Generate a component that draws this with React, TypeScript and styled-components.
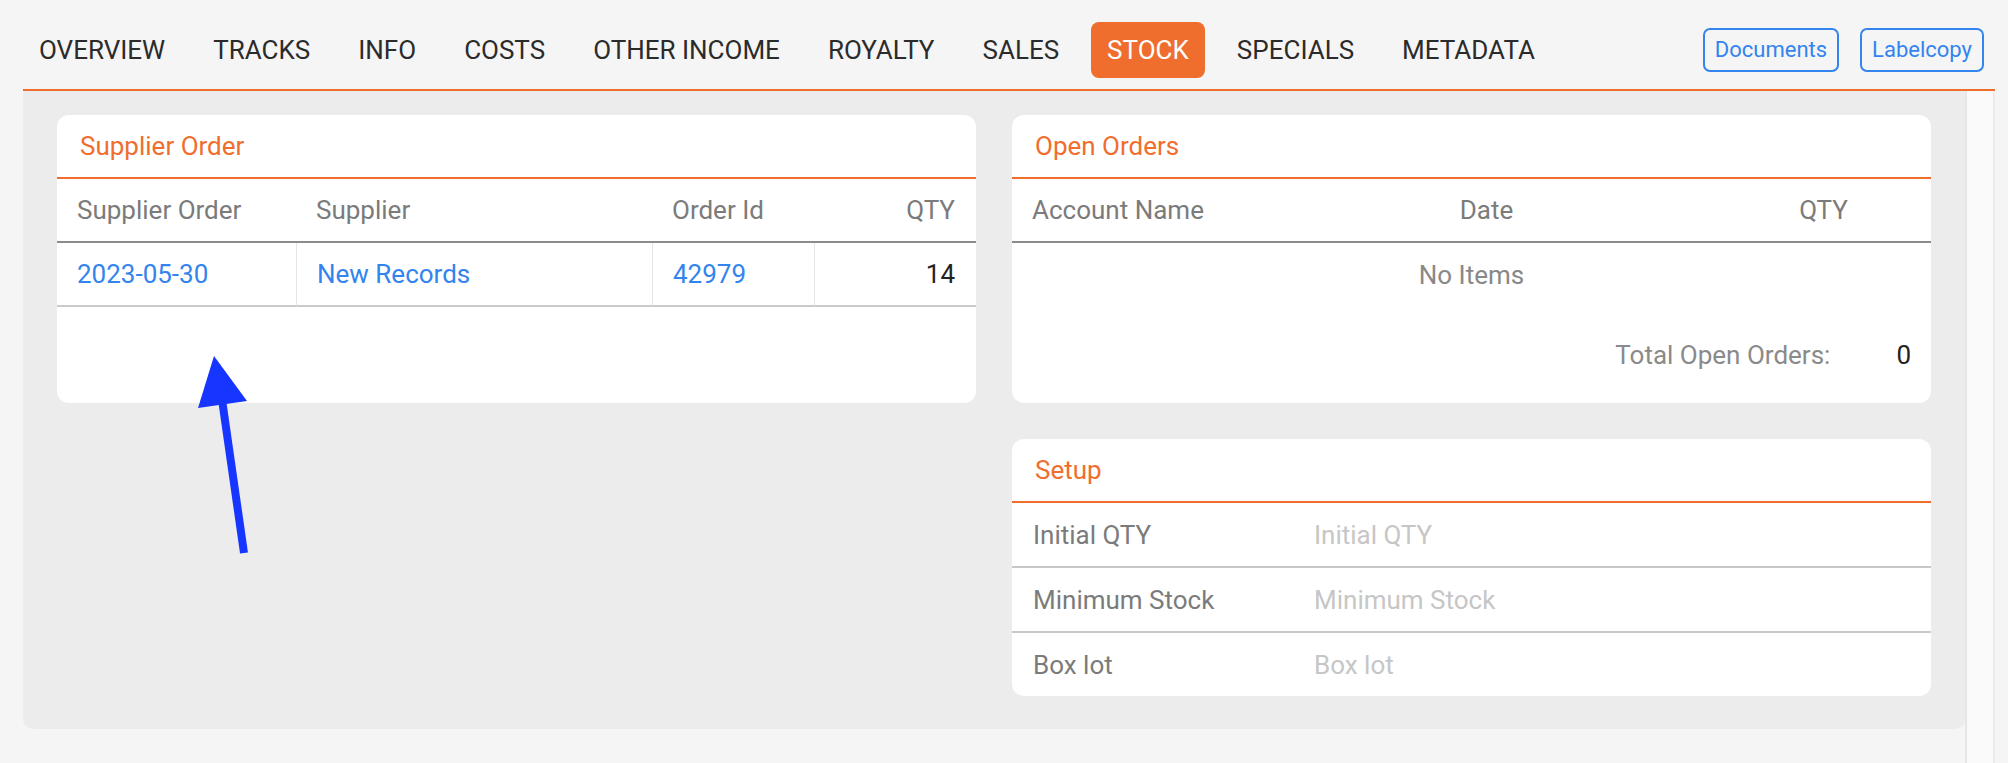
import React from 'react'
import styled, { createGlobalStyle } from 'styled-components'

const ORANGE = '#ef6e2e'
const LINK = '#3384ee'
const MUTED = '#7b7b7b'

const GlobalStyle = createGlobalStyle`
  * {
    box-sizing: border-box;
  }
  html,
  body {
    margin: 0;
    padding: 0;
    background: #f5f5f5;
    font-family: Roboto, 'Liberation Sans', Arial, sans-serif;
  }
`

const Page = styled.div`
  position: relative;
  min-height: 100vh;
  display: flex;
  flex-direction: column;
  background: #f5f5f5;
`

const TopBar = styled.header`
  display: flex;
  align-items: center;
  height: 91px;
  margin: 0 13px 0 23px;
  padding: 10px 11px 0 0;
  border-bottom: 2px solid ${ORANGE};
`

const Tabs = styled.nav`
  flex: 1;
  display: flex;
  gap: 16px;
`

const Tab = styled.a<{ $active?: boolean }>`
  display: flex;
  align-items: center;
  height: 56px;
  padding: 0 16px;
  border-radius: 8px;
  font-size: 26px;
  text-transform: uppercase;
  color: ${(p) => (p.$active ? '#ffffff' : '#2b2b2b')};
  background: ${(p) => (p.$active ? ORANGE : 'transparent')};
  cursor: pointer;
`

const Actions = styled.div`
  display: flex;
  gap: 21px;
`

const OutlineButton = styled.button`
  height: 44px;
  padding: 0 10px;
  border: 2px solid ${LINK};
  border-radius: 7px;
  background: transparent;
  color: ${LINK};
  font-family: Roboto, 'Liberation Sans', Arial, sans-serif;
  font-size: 22px;
  cursor: pointer;
`

const Body = styled.div`
  flex: 1;
  display: flex;
  align-items: flex-start;
  margin-right: 13px;
`

const Panel = styled.main`
  flex: 1;
  margin-left: 23px;
  display: grid;
  grid-template-columns: 1fr 1fr;
  gap: 36px;
  padding: 24px 34px 33px;
  background: #ececec;
  border-radius: 0 0 10px 10px;
`

const ScrollTrack = styled.div`
  align-self: stretch;
  width: 30px;
  background: #fafafa;
  border-left: 2px solid #e6e6e6;
  border-right: 2px solid #ebebeb;
`

const Card = styled.section<{ $col: number; $row: number }>`
  grid-column: ${(p) => p.$col};
  grid-row: ${(p) => p.$row};
  background: #ffffff;
  border-radius: 12px;
  overflow: hidden;
`

const CardTitle = styled.h3`
  display: flex;
  align-items: center;
  height: 64px;
  margin: 0;
  padding-left: 23px;
  border-bottom: 2px solid ${ORANGE};
  color: ${ORANGE};
  font-size: 26px;
  font-weight: 400;
`

const TableGrid = styled.div<{ $columns: string }>`
  display: grid;
  grid-template-columns: ${(p) => p.$columns};
`

const HeadCell = styled.div<{ $align?: 'left' | 'center' | 'right' }>`
  display: flex;
  align-items: center;
  justify-content: ${(p) =>
    p.$align === 'right' ? 'flex-end' : p.$align === 'center' ? 'center' : 'flex-start'};
  height: 64px;
  padding: 0 21px 0 20px;
  border-bottom: 2px solid #8c8c8c;
  color: ${MUTED};
  font-size: 26px;
`

const BodyCell = styled.div<{ $link?: boolean; $divider?: boolean; $align?: 'left' | 'right' }>`
  display: flex;
  align-items: center;
  justify-content: ${(p) => (p.$align === 'right' ? 'flex-end' : 'flex-start')};
  height: 64px;
  padding: 0 21px 0 20px;
  border-bottom: 2px solid #cacaca;
  border-left: ${(p) => (p.$divider ? '1px solid #e4e4e4' : 'none')};
  color: ${(p) => (p.$link ? LINK : '#222222')};
  font-size: 26px;
  cursor: ${(p) => (p.$link ? 'pointer' : 'default')};
`

const EmptyRow = styled.div`
  grid-column: 1 / -1;
  display: flex;
  align-items: center;
  justify-content: center;
  height: 64px;
  color: #888888;
  font-size: 26px;
`

const TotalRow = styled.div`
  display: flex;
  align-items: center;
  justify-content: flex-end;
  gap: 66px;
  height: 96px;
  padding-right: 20px;
  font-size: 26px;
`

const TotalLabel = styled.span`
  color: #8a8a8a;
`

const TotalValue = styled.span`
  color: #222222;
`

const SetupRow = styled.label`
  display: grid;
  grid-template-columns: 281px 1fr;
  align-items: center;
  height: 63px;
  padding-left: 21px;
  color: ${MUTED};
  font-size: 26px;

  & + & {
    height: 65px;
    border-top: 2px solid #c8c8c8;
  }
`

const SetupInput = styled.input`
  width: 100%;
  padding: 0;
  border: none;
  outline: none;
  background: transparent;
  color: #333333;
  font-family: Roboto, 'Liberation Sans', Arial, sans-serif;
  font-size: 26px;

  &::placeholder {
    color: #c6c6c6;
  }
`

const Pointer = styled.svg`
  position: absolute;
  left: 190px;
  top: 350px;
  width: 70px;
  height: 215px;
  pointer-events: none;
`

const tabs = [
  'Overview',
  'Tracks',
  'Info',
  'Costs',
  'Other Income',
  'Royalty',
  'Sales',
  'Stock',
  'Specials',
  'Metadata',
]

const setupFields = ['Initial QTY', 'Minimum Stock', 'Box lot']

const App = () => {
  return (
    <>
      <GlobalStyle />
      <Page>
        <TopBar>
          <Tabs>
            {tabs.map((tab) => (
              <Tab key={tab} $active={tab === 'Stock'}>
                {tab}
              </Tab>
            ))}
          </Tabs>
          <Actions>
            <OutlineButton>Documents</OutlineButton>
            <OutlineButton>Labelcopy</OutlineButton>
          </Actions>
        </TopBar>

        <Body>
          <Panel>
            <Card $col={1} $row={1}>
              <CardTitle>Supplier Order</CardTitle>
              <TableGrid $columns="239px 356px 162px 162px">
                <HeadCell>Supplier Order</HeadCell>
                <HeadCell>Supplier</HeadCell>
                <HeadCell>Order Id</HeadCell>
                <HeadCell $align="right">QTY</HeadCell>
                <BodyCell $link>2023-05-30</BodyCell>
                <BodyCell $link $divider>
                  New Records
                </BodyCell>
                <BodyCell $link $divider>
                  42979
                </BodyCell>
                <BodyCell $divider $align="right">
                  14
                </BodyCell>
              </TableGrid>
            </Card>

            <Card $col={2} $row={1}>
              <CardTitle>Open Orders</CardTitle>
              <TableGrid $columns="245px 460px 214px">
                <HeadCell>Account Name</HeadCell>
                <HeadCell $align="center">Date</HeadCell>
                <HeadCell $align="center">QTY</HeadCell>
                <EmptyRow>No Items</EmptyRow>
              </TableGrid>
              <TotalRow>
                <TotalLabel>Total Open Orders:</TotalLabel>
                <TotalValue>0</TotalValue>
              </TotalRow>
            </Card>

            <Card $col={2} $row={2}>
              <CardTitle>Setup</CardTitle>
              {setupFields.map((field) => (
                <SetupRow key={field}>
                  <span>{field}</span>
                  <SetupInput placeholder={field} />
                </SetupRow>
              ))}
            </Card>
          </Panel>
          <ScrollTrack />
        </Body>

        <Pointer viewBox="190 350 70 215">
          <line x1="222.5" y1="403" x2="244" y2="553" stroke="#1636ff" strokeWidth="8" />
          <polygon points="214,356 198,408 247,401" fill="#1636ff" />
        </Pointer>
      </Page>
    </>
  )
}

export default App
